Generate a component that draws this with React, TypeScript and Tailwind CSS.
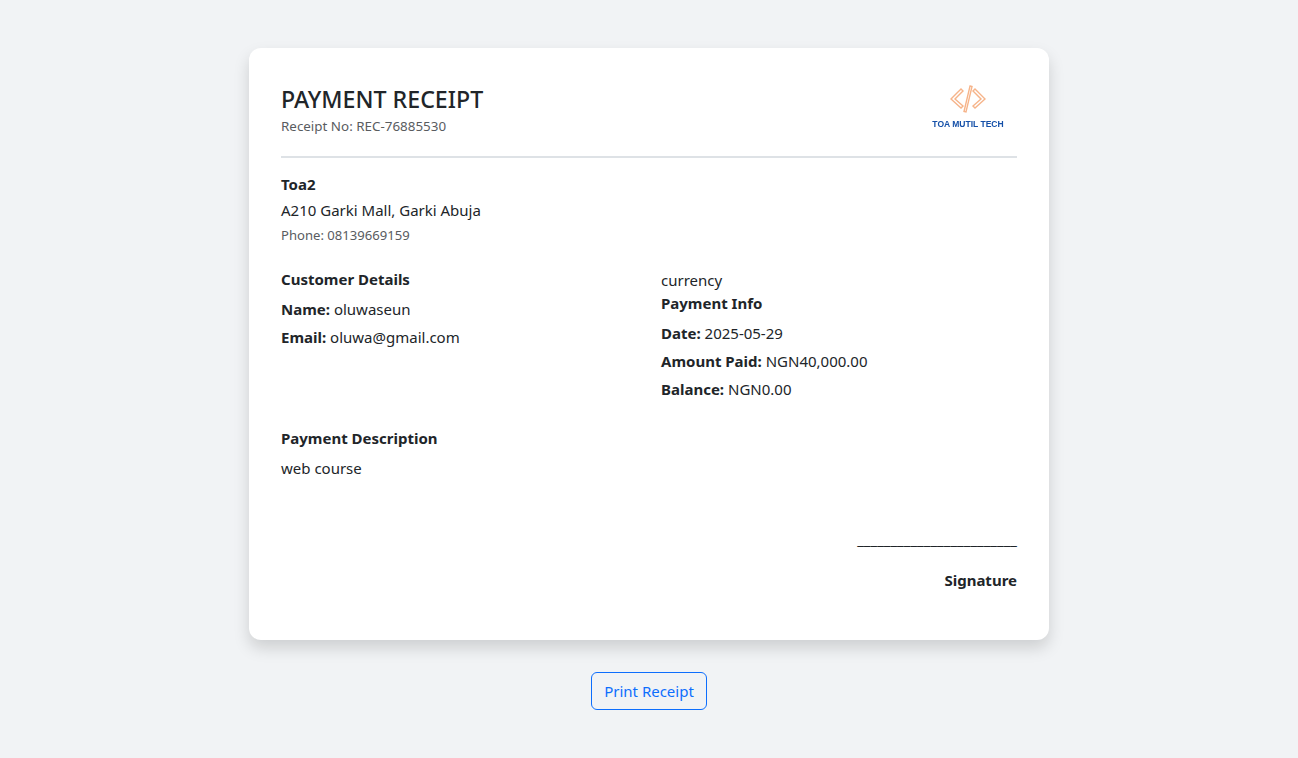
export default function App() {
  return (
    <div className="min-h-[758px] bg-[#f1f3f5] pt-12 font-['Noto_Sans','Open_Sans',sans-serif] text-[15px] leading-6 text-[#212529]">
      <div className="mx-auto h-[592px] w-[800px] rounded-xl bg-white p-8 shadow-[0_8px_16px_rgba(0,0,0,0.15)]">
        <div className="flex h-[78px] items-start justify-between border-b-2 border-[#dee2e6]">
          <div className="pt-[5px]">
            <h1 className="text-[23.2px] leading-[29px] font-medium">PAYMENT RECEIPT</h1>
            <p className="mt-[2px] text-[13.4px] leading-5 text-[#595c5f]">Receipt No: REC-76885530</p>
          </div>
          <div className="flex w-[98px] flex-col items-center">
            <svg width="36" height="28" viewBox="0 0 36 28" fill="none" stroke="#f6b48a" strokeWidth="1.4" className="mt-[5px] blur-[0.3px]">
              <path d="M11 4 L1 14 L11 23 L13 21 L5 14 L13 6 Z" />
              <path d="M25 4 L35 14 L25 23 L23 21 L31 14 L23 6 Z" />
              <path d="M20 1 L22 1.5 L16 27 L14 26.5 Z" />
            </svg>
            <span className="mt-[5px] scale-x-[0.87] font-['Liberation_Sans',sans-serif] text-[9.8px] leading-3 font-bold whitespace-nowrap text-[#1550a8] blur-[0.2px]">TOA MUTIL TECH</span>
          </div>
        </div>
        <div className="pt-[14px]">
          <p className="leading-[24px] font-bold">Toa2</p>
          <p className="mt-[2px] leading-[24px]">A210 Garki Mall, Garki Abuja</p>
          <p className="mt-[3px] text-[13.1px] leading-5 text-[#595c5f]">Phone: 08139669159</p>
        </div>
        <div className="mt-[22px] flex gap-6">
          <div className="w-[356px]">
            <h2 className="leading-6 font-bold">Customer Details</h2>
            <p className="mt-[6px]"><b>Name:</b> oluwaseun</p>
            <p className="mt-1"><b>Email:</b> oluwa@gmail.com</p>
          </div>
          <div className="w-[356px] pt-[3px]">
            <p className="leading-[21px]">currency</p>
            <h2 className="leading-6 font-bold">Payment Info</h2>
            <p className="mt-[6px]"><b>Date:</b> 2025-05-29</p>
            <p className="mt-1"><b>Amount Paid:</b> NGN40,000.00</p>
            <p className="mt-1"><b>Balance:</b> NGN0.00</p>
          </div>
        </div>
        <div className="mt-[25px]">
          <h2 className="leading-6 font-bold">Payment Description</h2>
          <p className="mt-[6px]">web course</p>
        </div>
        <div className="mt-[47px] text-right">
          <p>________________________</p>
          <p className="mt-[17px] font-bold">Signature</p>
        </div>
      </div>
      <div className="mt-8 flex justify-center">
        <button className="h-[38px] w-[116px] rounded-md border border-[#0d6efd] text-[15px] text-[#0d6efd]">Print Receipt</button>
      </div>
    </div>
  );
}
